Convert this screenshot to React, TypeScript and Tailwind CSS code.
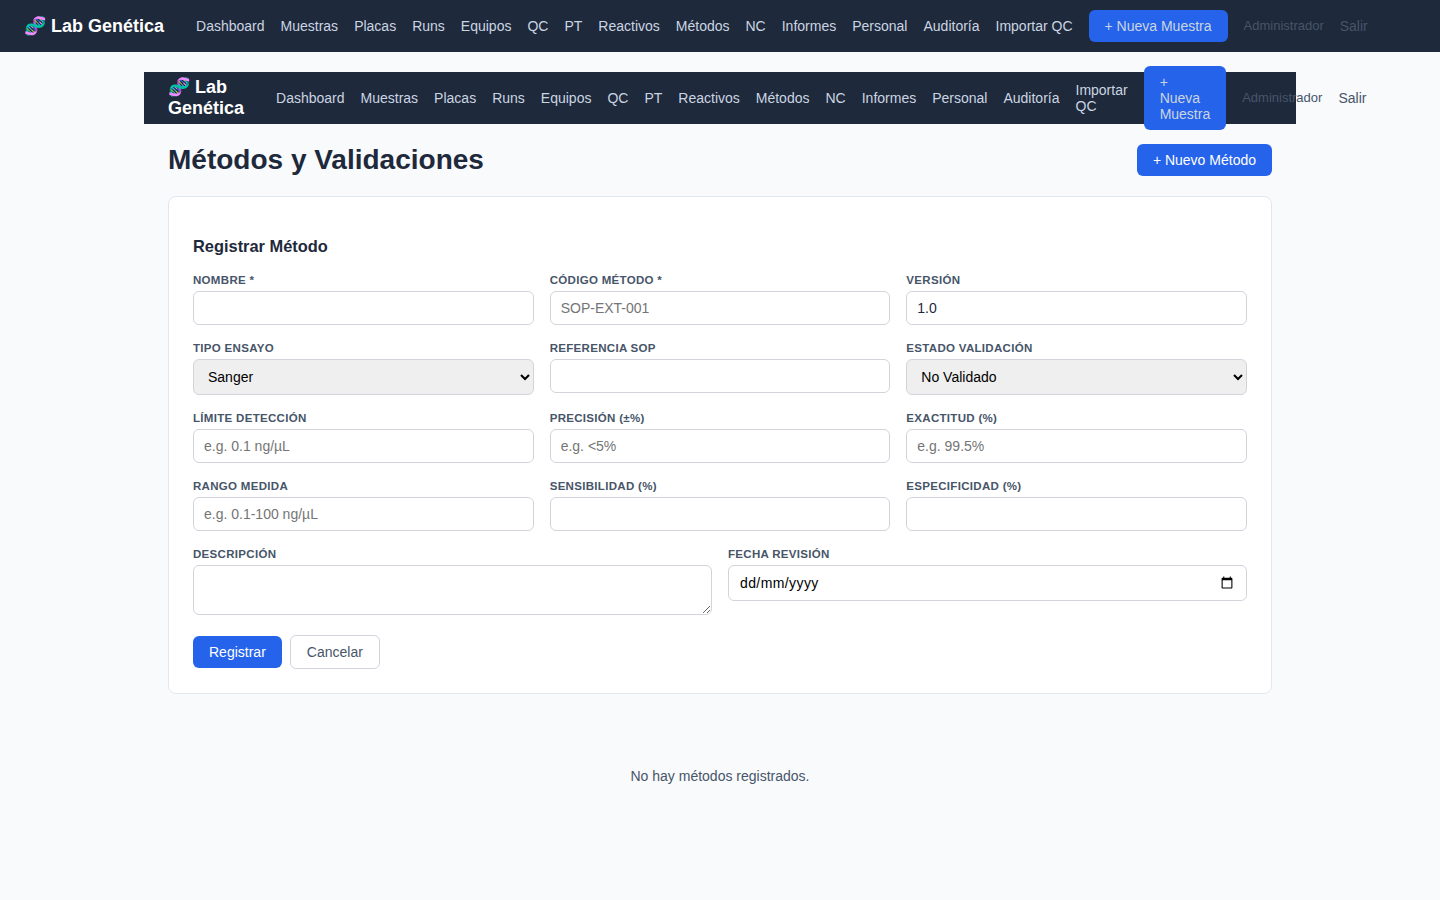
const LINKS = ['Dashboard', 'Muestras', 'Placas', 'Runs', 'Equipos', 'QC', 'PT', 'Reactivos', 'Métodos', 'NC', 'Informes', 'Personal', 'Auditoría', 'Importar QC'];

const inputClass = 'w-full h-[34px] rounded-md border border-[#d1d5db] bg-white px-2.5 text-sm text-[#1e293b] placeholder:text-[#757575] outline-none';
const selectClass = 'w-full h-9 rounded-md border border-[#d1d5db] bg-[#efefef] px-2.5 text-sm text-black outline-none';

function Navbar() {
  return (
    <nav className="flex h-[52px] items-center gap-4 bg-[#1e293b] px-6">
      <div className="mr-4 text-[18px] leading-[21px] font-bold text-white">🧬 Lab Genética</div>
      <div className="flex items-center gap-4">
        {LINKS.map(link => (
          <a key={link} className="text-sm leading-4 text-[#cbd5e1]">{link}</a>
        ))}
      </div>
      <button className="rounded-md bg-[#2563eb] px-4 py-2 text-left text-sm leading-4 text-[#cbd5e1]">+ Nueva Muestra</button>
      <div className="flex items-center gap-4 pr-12">
        <span className="text-[13px] text-[#475569]">Administrador</span>
        <a className="text-sm text-[#475569]">Salir</a>
      </div>
    </nav>
  );
}

function Field({ label, children }: { label: string; children: React.ReactNode }) {
  return (
    <div className="min-w-0">
      <label className="mb-1 block text-[11.52px] leading-[14px] font-bold tracking-[0.3px] text-[#475569] uppercase">{label}</label>
      {children}
    </div>
  );
}

export default function App() {
  return (
    <div lang="es" className="min-h-screen bg-[#f8fafc] font-['Liberation_Sans',Arial,sans-serif] text-[#1e293b]">
      <Navbar />
      <main className="mx-auto max-w-[1152px] pt-5">
        <Navbar />
        <div className="px-6">
          <div className="mt-5 mb-5 flex items-center justify-between">
            <h1 className="text-[28px] leading-8 font-bold">Métodos y Validaciones</h1>
            <button className="h-8 rounded-md bg-[#2563eb] px-4 text-sm text-white">+ Nuevo Método</button>
          </div>

          <div className="rounded-lg border border-[#e2e8f0] bg-white px-6 pt-10 pb-6">
            <h3 className="mb-[17px] text-[16.4px] leading-[19px] font-bold">Registrar Método</h3>

            <div className="grid grid-cols-3 gap-x-4 gap-y-4">
              <Field label="Nombre *"><input className={inputClass} /></Field>
              <Field label="Código Método *"><input className={inputClass} placeholder="SOP-EXT-001" /></Field>
              <Field label="Versión"><input className={inputClass} defaultValue="1.0" /></Field>

              <Field label="Tipo Ensayo">
                <select className={selectClass} defaultValue="Sanger">
                  <option>Sanger</option>
                  <option>NGS</option>
                  <option>qPCR</option>
                </select>
              </Field>
              <Field label="Referencia SOP"><input className={inputClass} /></Field>
              <Field label="Estado Validación">
                <select className={selectClass} defaultValue="No Validado">
                  <option>No Validado</option>
                  <option>Validado</option>
                </select>
              </Field>

              <Field label="Límite Detección"><input className={inputClass} placeholder="e.g. 0.1 ng/µL" /></Field>
              <Field label="Precisión (±%)"><input className={inputClass} placeholder="e.g. <5%" /></Field>
              <Field label="Exactitud (%)"><input className={inputClass} placeholder="e.g. 99.5%" /></Field>

              <Field label="Rango Medida"><input className={inputClass} placeholder="e.g. 0.1-100 ng/µL" /></Field>
              <Field label="Sensibilidad (%)"><input className={inputClass} /></Field>
              <Field label="Especificidad (%)"><input className={inputClass} /></Field>
            </div>

            <div className="mt-4 grid grid-cols-2 items-start gap-x-4">
              <Field label="Descripción">
                <textarea className="block h-[50px] w-full rounded-md border border-[#d1d5db] bg-white px-2.5 py-2 text-sm outline-none" />
              </Field>
              <Field label="Fecha Revisión">
                <div className="relative">
                  <input type="date" className="block h-9 w-full rounded-md border border-[#d1d5db] bg-white px-2.5 text-sm text-black outline-none [&::-webkit-datetime-edit]:opacity-0" />
                  <span className="pointer-events-none absolute top-0 left-3 text-sm leading-9 tracking-[0.4px] text-black">dd/mm/yyyy</span>
                </div>
              </Field>
            </div>

            <div className="mt-5 flex items-center gap-2">
              <button className="h-8 rounded-md bg-[#2563eb] px-4 text-sm text-white">Registrar</button>
              <button className="h-[34px] rounded-md border border-[#d1d5db] bg-white px-4 text-sm text-[#475569]">Cancelar</button>
            </div>
          </div>

          <p className="mt-[72px] text-center text-sm text-[#475569]">No hay métodos registrados.</p>
        </div>
      </main>
    </div>
  );
}
